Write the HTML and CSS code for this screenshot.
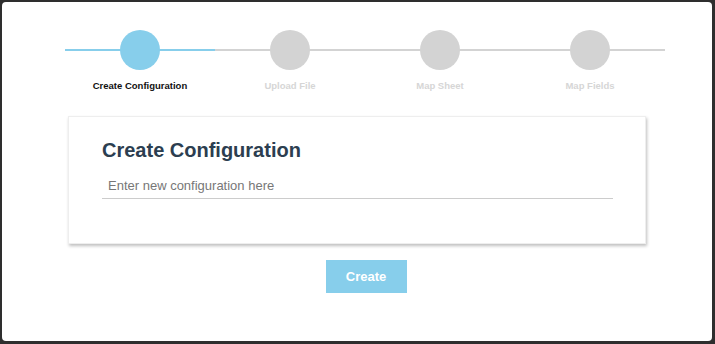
FILE: index.html
```html
<!DOCTYPE html>
<html lang="en">

<head>
    <meta charset="UTF-8">
    <meta name="viewport" content="width=device-width, initial-scale=1.0">
    <title>Create Configuration</title>

    <link rel="stylesheet" href="styles.css">
</head>

<body>
    <div class="modal">
        <div class="steps">
            <div class="step done">
                <div class="dot"></div>
                <span>Create Configuration</span>
            </div>
            <div class="step">
                <div class="dot"></div>
                <span>Upload File</span>
            </div>
            <div class="step">
                <div class="dot"></div>
                <span>Map Sheet</span>
            </div>
            <div class="step">
                <div class="dot"></div>
                <span>Map Fields</span>
            </div>
        </div>

        <div class="card">
            <h2>Create Configuration</h2>
            <input type="text" class="config-input" placeholder="Enter new configuration here">
        </div>

        <div class="actions">
            <button class="create-btn">Create</button>
        </div>
    </div>
</body>
</html>
```

FILE: styles.css
```css
body {
    font-family: "Liberation Sans", Arial, sans-serif;
    margin: 0;
    padding: 2px 3px 3px 2px;
    background-color: #2e2e2e;
}

.modal {
    width: 710px;
    height: 339px;
    background-color: #fff;
    border-radius: 4px;
    box-sizing: border-box;
    padding-top: 28px;
}

.steps {
    display: flex;
    width: 600px;
    margin-left: 63px;
}

.step {
    position: relative;
    width: 150px;
    display: flex;
    flex-direction: column;
    align-items: center;
}

.step::before {
    content: "";
    position: absolute;
    left: 0;
    right: 0;
    top: 19px;
    height: 2px;
    background-color: #d3d3d3;
}

.step .dot {
    position: relative;
    width: 40px;
    height: 40px;
    border-radius: 50%;
    background-color: #d3d3d3;
}

.step span {
    margin-top: 10px;
    font-size: 9.5px;
    line-height: 11px;
    font-weight: bold;
    color: #d6d6d6;
}

.step.done::before,
.step.done .dot {
    background-color: #87ceeb;
}

.step.done span {
    color: #111;
}

.card {
    width: 578px;
    margin: 25px auto 0;
    box-sizing: border-box;
    padding: 22px 32px 44px 33px;
    border: 1px solid #eee;
    box-shadow: 1px 2px 3px rgba(0, 0, 0, 0.25);
}

.card h2 {
    margin: 0;
    font-size: 20px;
    line-height: 23px;
    color: #2c3e50;
}

.config-input {
    display: block;
    width: 100%;
    height: 22px;
    margin-top: 15px;
    box-sizing: border-box;
    padding: 0 6px 4px;
    border: none;
    border-bottom: 1px solid #ccc;
    font-family: inherit;
    font-size: 13px;
    outline: none;
}

.config-input::placeholder {
    color: #777;
}

.actions {
    display: flex;
    justify-content: center;
    padding-left: 18px;
    margin-top: 16px;
}

.create-btn {
    width: 81px;
    height: 33px;
    background-color: #87ceeb;
    color: white;
    border: none;
    font-family: inherit;
    font-size: 13px;
    font-weight: bold;
}
```
